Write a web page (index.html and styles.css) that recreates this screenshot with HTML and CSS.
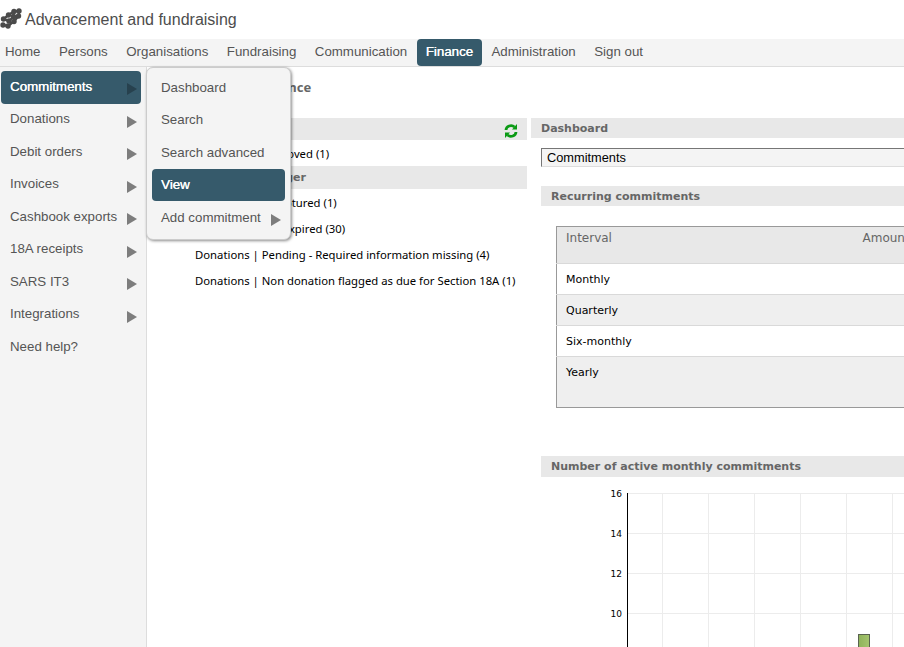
FILE: index.html
```html
<!DOCTYPE html>
<html lang="en">
<head>
    <meta charset="UTF-8">
    <meta name="viewport" content="width=device-width, initial-scale=1.0">
    <title>Advancement and fundraising</title>
    <link rel="stylesheet" href="styles.css">
</head>
<body>
    <header class="top-bar">
        <svg class="logo" width="22" height="22" viewBox="0 0 22 22">
            <g fill="none" stroke="#4a4a4a" stroke-width="2.400">
                <path d="M3 17 L8 18 L14 13.500 L18.500 8 L19 3 L14 3.500 L8.500 7 L3.500 11 L9 13 L13.500 8.500"/>
            </g>
            <g fill="#4a4a4a">
                <circle cx="14" cy="3.500" r="2.700"/>
                <circle cx="19" cy="3" r="2.700"/>
                <circle cx="8.500" cy="7" r="2.700"/>
                <circle cx="13.500" cy="8.500" r="2.700"/>
                <circle cx="18.500" cy="8" r="2.700"/>
                <circle cx="3.500" cy="11" r="2.700"/>
                <circle cx="9" cy="13" r="2.700"/>
                <circle cx="14" cy="13.500" r="2.700"/>
                <circle cx="3" cy="17" r="2.700"/>
                <circle cx="8" cy="18" r="2.700"/>
            </g>
        </svg>
        <span class="app-title">Advancement and fundraising</span>
    </header>

    <nav class="main-nav">
        <a href="#">Home</a>
        <a href="#">Persons</a>
        <a href="#">Organisations</a>
        <a href="#">Fundraising</a>
        <a href="#">Communication</a>
        <a href="#" class="active">Finance</a>
        <a href="#">Administration</a>
        <a href="#">Sign out</a>
    </nav>

    <div class="page">
        <aside class="side-nav">
            <a href="#" class="active">Commitments<span class="arrow"></span></a>
            <a href="#">Donations<span class="arrow"></span></a>
            <a href="#">Debit orders<span class="arrow"></span></a>
            <a href="#">Invoices<span class="arrow"></span></a>
            <a href="#">Cashbook exports<span class="arrow"></span></a>
            <a href="#">18A receipts<span class="arrow"></span></a>
            <a href="#">SARS IT3<span class="arrow"></span></a>
            <a href="#">Integrations<span class="arrow"></span></a>
            <a href="#">Need help?</a>
        </aside>

        <!-- Flyout of the Commitments item -->
        <div class="flyout">
            <a href="#">Dashboard</a>
            <a href="#">Search</a>
            <a href="#">Search advanced</a>
            <a href="#" class="active">View</a>
            <a href="#">Add commitment<span class="arrow"></span></a>
        </div>

        <main class="content">
            <h1 class="page-title">Finance</h1>
            <div class="columns">
                <section class="tasks">
                    <h2 class="section-head tasks-head">
                        Tasks
                        <svg class="refresh" width="14" height="16" viewBox="0 0 14 16">
                            <g fill="none" stroke="#0a9a14" stroke-width="2.800">
                                <path d="M2 7 A5 4.500 0 0 1 10.500 4"/>
                                <path d="M12 9 A5 4.500 0 0 1 3.500 12"/>
                            </g>
                            <path d="M8 6.500 L13 6.500 L13 1 Z" fill="#0a9a14"/>
                            <path d="M6 9.500 L1 9.500 L1 15 Z" fill="#0a9a14"/>
                        </svg>
                    </h2>
                    <p class="task-row">Donations | Approved (1)</p>
                    <h2 class="section-head second-head">Manager</h2>
                    <p class="task-row">Invoices | Not captured (1)</p>
                    <p class="task-row">Commitments | Expired (30)</p>
                    <p class="task-row">Donations | Pending - Required information missing (4)</p>
                    <p class="task-row">Donations | Non donation flagged as due for Section 18A (1)</p>
                </section>

                <section class="dashboard">
                    <h2 class="section-head">Dashboard</h2>
                    <div class="dash-body">
                        <div class="dash-select">Commitments</div>
                        <h3 class="section-head sub-head">Recurring commitments</h3>
                        <table class="recurring">
                            <thead>
                                <tr><th>Interval</th><th class="amount">Amount</th></tr>
                            </thead>
                            <tbody>
                                <tr><td>Monthly</td><td></td></tr>
                                <tr><td>Quarterly</td><td></td></tr>
                                <tr><td>Six-monthly</td><td></td></tr>
                                <tr class="last"><td>Yearly</td><td></td></tr>
                            </tbody>
                        </table>
                        <h3 class="section-head chart-head">Number of active monthly commitments</h3>
                        <svg class="chart" width="364" height="170" viewBox="0 0 364 170">
                            <defs>
                                <linearGradient id="barFill" x1="0" x2="1" y1="0" y2="0">
                                    <stop offset="0" stop-color="#8fb35a"/>
                                    <stop offset="1" stop-color="#a5c46e"/>
                                </linearGradient>
                            </defs>
                            <g stroke="#ececec" fill="none">
                                <path d="M121.500 10 V170"/>
                                <path d="M167.500 10 V170"/>
                                <path d="M213.500 10 V170"/>
                                <path d="M259.500 10 V170"/>
                                <path d="M305.500 10 V170"/>
                                <path d="M351.500 10 V170"/>
                                <path d="M86 10.500 H364"/>
                                <path d="M86 50.500 H364"/>
                                <path d="M86 90.500 H364"/>
                                <path d="M86 130.500 H364"/>
                            </g>
                            <path d="M86.500 10 V170" stroke="#000" fill="none"/>
                            <g class="axis-label">
                                <text x="81" y="14">16</text>
                                <text x="81" y="54">14</text>
                                <text x="81" y="94">12</text>
                                <text x="81" y="134">10</text>
                            </g>
                            <rect x="317.500" y="151.500" width="11" height="20" fill="url(#barFill)" stroke="#5a6350"/>
                        </svg>
                    </div>
                </section>
            </div>
        </main>
    </div>
</body>
</html>
```

FILE: styles.css
```css
html, body {
    height: 100%;
}
body {
    margin: 0;
    width: 904px;
    height: 647px;
    overflow: hidden;
    background-color: #fff;
    font-family: "Liberation Sans", Arial, sans-serif;
    color: #555;
}
a {
    text-decoration: none;
    color: inherit;
}

.top-bar {
    display: flex;
    align-items: center;
    height: 39px;
    gap: 3px;
}
.logo {
    flex: none;
    margin-bottom: 1px;
}
.app-title {
    font-size: 16px;
    color: #4d4d4d;
}

.main-nav {
    display: flex;
    height: 27px;
    background-color: #f4f4f4;
    border-bottom: 1px solid #ddd;
    font-size: 13.300px;
}
.main-nav a {
    padding: 5px 9px 0;
    height: 22px;
    margin-right: 0.500px;
    border-radius: 4px;
}
.main-nav a:first-child {
    padding-left: 5px;
}
.main-nav a.active {
    background-color: #365a6b;
    color: #fff;
    text-shadow: 0.300px 0 0 #fff;
}

.page {
    position: relative;
    display: flex;
    height: 580px;
}

.side-nav {
    flex: none;
    box-sizing: border-box;
    width: 147px;
    padding: 4px 5px 0 1px;
    background-color: #f4f4f4;
    border-right: 1px solid #ddd;
    font-size: 13.300px;
}
.side-nav a {
    position: relative;
    display: block;
    height: 32.500px;
    box-sizing: border-box;
    padding: 7.900px 0 0 9px;
    border-radius: 4px;
}
.side-nav a.active {
    background-color: #365a6b;
    color: #fff;
    text-shadow: 0.300px 0 0 #fff;
}
.arrow {
    position: absolute;
    right: 4px;
    top: 12px;
    width: 0;
    height: 0;
    border-left: 10px solid #7d7d7d;
    border-top: 6px solid transparent;
    border-bottom: 6px solid transparent;
}
.active .arrow {
    border-left-color: #27414e;
}

.flyout {
    position: absolute;
    left: 146px;
    top: 0;
    box-sizing: border-box;
    width: 145px;
    height: 173px;
    padding: 3px 5px;
    background-color: #f4f4f4;
    border: 1px solid #ccc;
    border-radius: 7px;
    box-shadow: 1px 1px 3px rgba(0, 0, 0, 0.45);
    font-size: 13.300px;
    z-index: 2;
}
.flyout a {
    position: relative;
    display: block;
    height: 32.500px;
    box-sizing: border-box;
    padding: 8.500px 0 0 9px;
    border-radius: 4px;
}
.flyout a.active {
    background-color: #365a6b;
    color: #fff;
    text-shadow: 0.300px 0 0 #fff;
}
.flyout .arrow {
    right: 4px;
    top: 13px;
}

.content {
    flex: 1;
    min-width: 0;
}
.page-title {
    margin: 0;
    height: 51px;
    padding: 11px 0 0 114px;
    box-sizing: border-box;
    font-family: "Noto Sans", sans-serif;
    font-size: 13px;
    font-weight: bold;
    color: #666;
}
.columns {
    display: flex;
    gap: 4px;
}
.section-head {
    margin: 0;
    background-color: #e8e8e8;
    font-family: "DejaVu Sans", sans-serif;
    font-size: 11px;
    font-weight: bold;
    color: #666;
}
.tasks {
    flex: none;
    width: 380px;
    font-family: "Noto Sans", sans-serif;
}
.tasks-head {
    display: flex;
    justify-content: space-between;
    align-items: center;
    height: 22px;
    padding: 0 9px 0 48px;
    box-sizing: border-box;
}
.refresh {
    margin-top: 3px;
}
.second-head {
    height: 23px;
    line-height: 23px;
    text-align: right;
    padding-right: 221px;
}
.task-row {
    margin: 0;
    height: 26px;
    line-height: 28px;
    padding-left: 48px;
    font-size: 11.300px;
    color: #000;
    white-space: nowrap;
}
.dashboard {
    flex: none;
    width: 460px;
}
.dashboard > .section-head {
    height: 20px;
    line-height: 22px;
    padding-left: 10px;
}
.dash-body {
    padding-left: 10px;
}
.dash-select {
    margin-top: 10px;
    height: 19px;
    line-height: 18px;
    box-sizing: border-box;
    padding-left: 5px;
    background-color: #f4f4f4;
    border-top: 1px solid #767676;
    border-left: 1px solid #767676;
    border-bottom: 1px solid #ddd;
    font-size: 12.800px;
    color: #000;
}
.sub-head {
    margin-top: 19px;
    height: 20px;
    line-height: 22px;
    padding-left: 10px;
}
.recurring {
    width: 500px;
    margin: 20px 0 0 15px;
    border-collapse: collapse;
    border: 1px solid #999;
    font-family: "DejaVu Sans", sans-serif;
    font-size: 11px;
    color: #000;
}
.recurring th {
    height: 37px;
    box-sizing: border-box;
    padding: 4px 9px 0;
    background-color: #e8e8e8;
    font-size: 12px;
    font-weight: normal;
    text-align: left;
    vertical-align: top;
    color: #666;
}
.recurring th.amount {
    width: 202px;
}
.recurring td {
    height: 31px;
    box-sizing: border-box;
    padding: 0 9px;
    border-top: 1px solid #d9d9d9;
}
.recurring tbody tr:nth-child(even) td {
    background-color: #efefef;
}
.recurring tr.last td {
    height: 51px;
    padding-top: 9px;
    vertical-align: top;
}
.chart-head {
    margin-top: 48px;
    height: 21px;
    line-height: 21px;
    padding-left: 10px;
}
.chart {
    display: block;
    margin-top: 6px;
}
.axis-label text {
    font-family: "DejaVu Sans", sans-serif;
    font-size: 9px;
    text-anchor: end;
    fill: #000;
}
```
